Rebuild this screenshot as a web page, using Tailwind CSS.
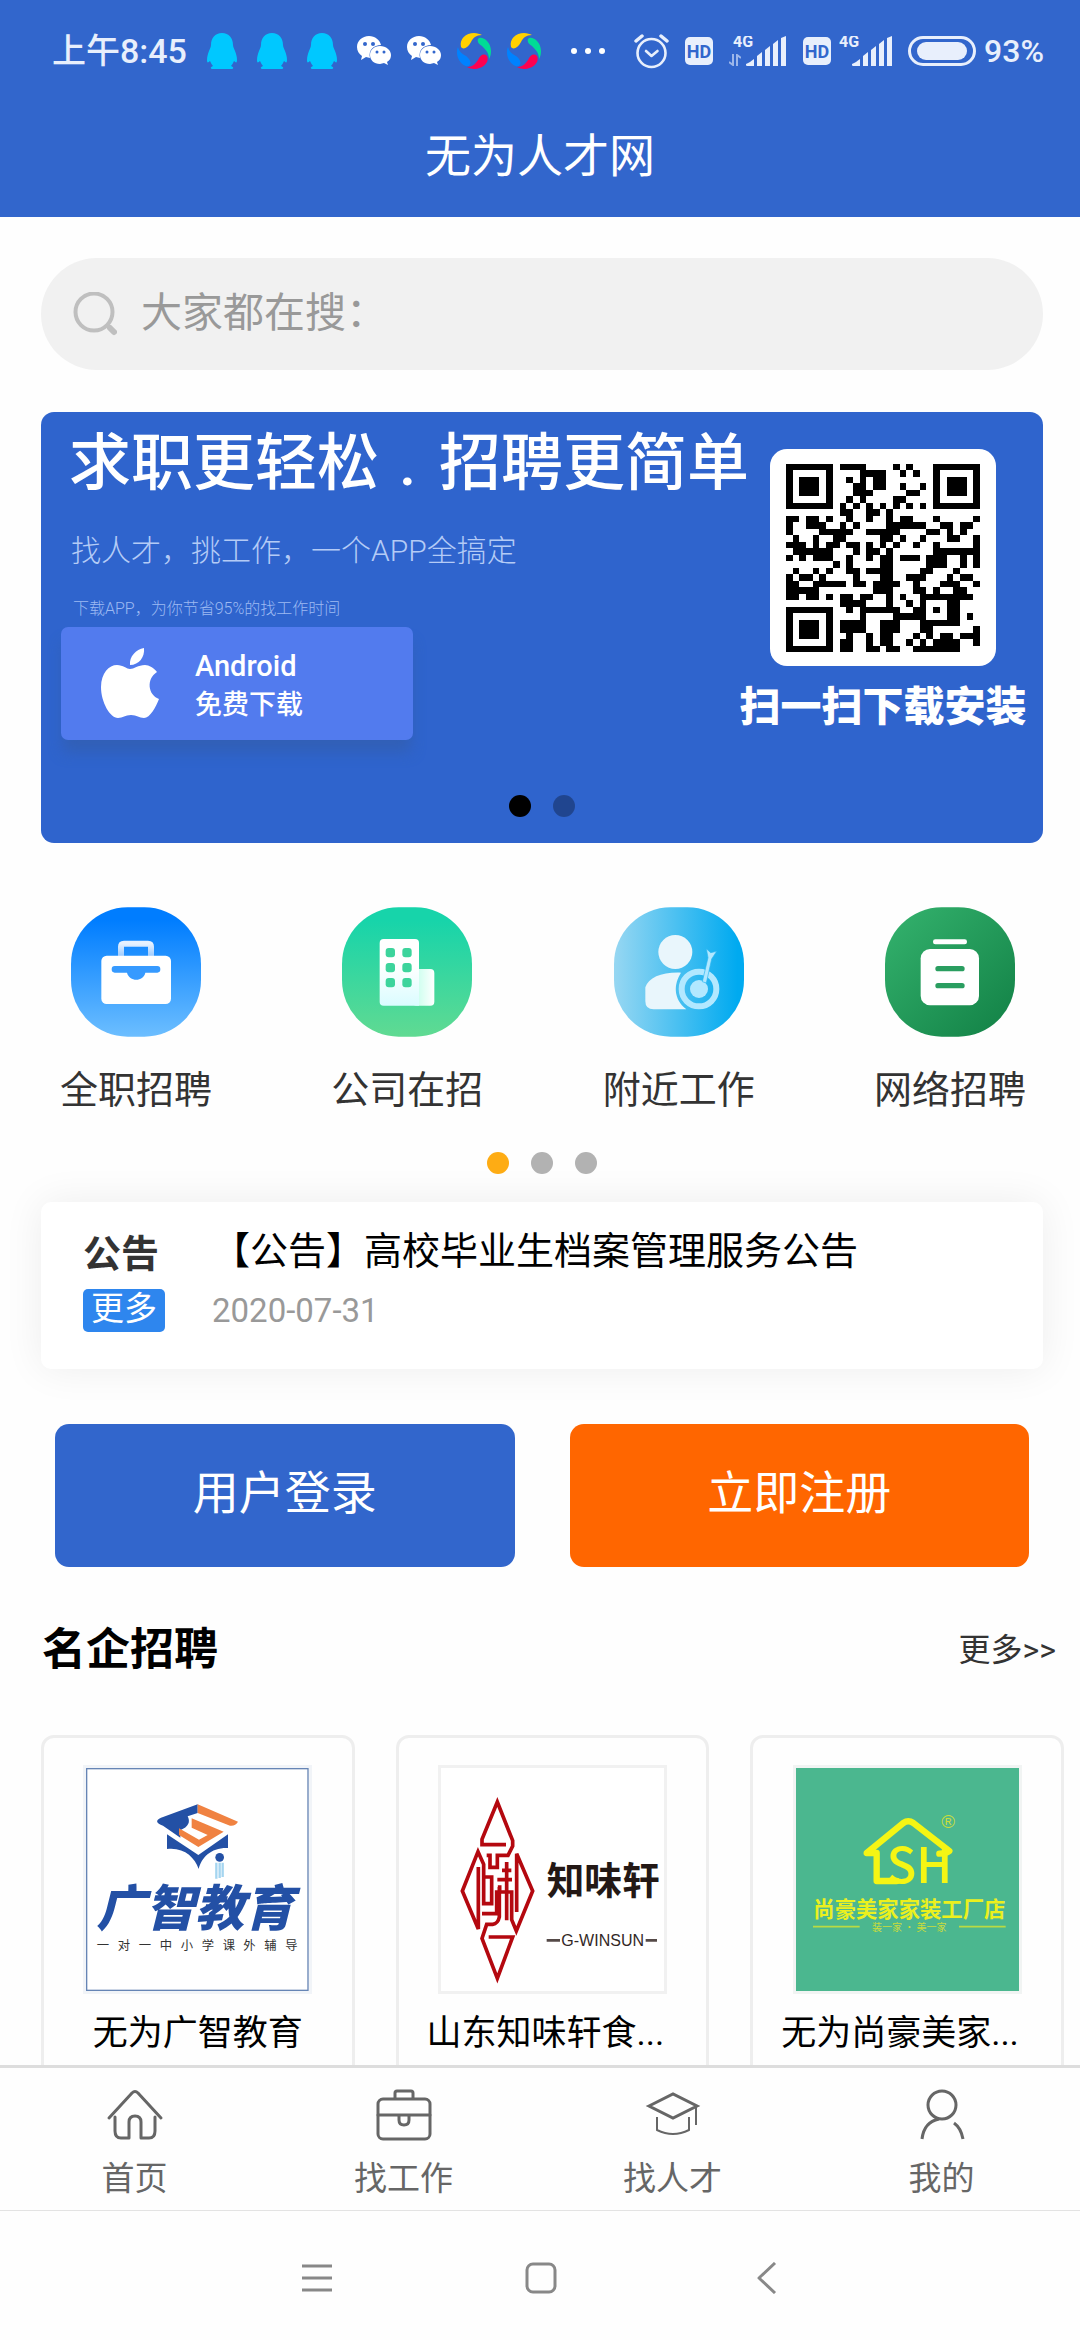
<!DOCTYPE html>
<html lang="zh-CN">
<head>
<meta charset="utf-8">
<meta name="viewport" content="width=device-width, initial-scale=1">
<title>无为人才网</title>
<script src="https://cdn.jsdelivr.net/npm/@tailwindcss/browser@4"></script>
</head>
<body class="flex h-screen flex-col overflow-hidden bg-[#fefefe] font-['Roboto','Noto_Sans_CJK_SC',sans-serif] text-[#333]">

<svg class="hidden" aria-hidden="true">
  <symbol id="penguin" viewBox="0 0 30 36">
    <path fill="#00c8ff" d="M15 0c7 0 11 5 11 12 0 3 4 8 4 15 0 3-1 3-3 1-1 2-2 4-3 5 3 1 3 3 0 3H6c-3 0-3-2 0-3-1-1-2-3-3-5-2 2-3 2-3-1 0-7 4-12 4-15C4 5 8 0 15 0z"/>
  </symbol>
  <symbol id="wechat" viewBox="0 0 34 30">
    <path fill="#fff" d="M12 0C5 0 0 5 0 11c0 4 2 7 5 9l-1 4 5-3 4 1C11 14 17 9 24 9 23 4 18 0 12 0z"/>
    <path fill="#fff" d="M23 10c-6 0-10 4-10 9s4 9 10 9l4-1 4 2-1-3c3-2 4-4 4-7 0-5-5-9-11-9z"/>
    <g fill="#3266cc"><circle cx="8" cy="8" r="2"/><circle cx="16" cy="8" r="2"/><circle cx="20" cy="16" r="1.5"/><circle cx="27" cy="16" r="1.5"/></g>
  </symbol>
  <symbol id="pinwheel" viewBox="0 0 34 36">
    <path fill="#ffd100" d="M4 14C2 6 9 0 17 0c3 0 6 1 8 2-6 0-9 3-11 7-3 6-8 8-10 5z"/>
    <path fill="#00dc96" d="M21 6c3-4 13 2 13 12 0 4-1 6-2 8 0-6-3-9-7-13-3-2-5-4-4-7z"/>
    <path fill="#ff0050" d="M30 23c3 6-4 13-13 13-2 0-5-1-7-2 6 0 8-3 11-7 2-5 6-7 9-4z"/>
    <path fill="#0082ff" d="M1 14c1 4 3 6 8 9 4 3 6 7 3 10C8 35 0 28 0 20c0-2 0-4 1-6z"/>
  </symbol>
  <symbol id="hd" viewBox="0 0 28 28">
    <rect width="28" height="28" rx="5" fill="#e8effc"/>
    <text x="14" y="21" text-anchor="middle" font-family="Roboto" font-weight="700" font-size="18" fill="#3266cc">HD</text>
  </symbol>
  <symbol id="signal" viewBox="0 0 56 30">
    <text x="0" y="11" font-family="Roboto" font-weight="700" font-size="16" fill="#e8effc">4G</text>
    <path fill="#e8effc" d="M14 30c-1 0-1-1-1-2 3-1 5-3 8-5v7zM24 20l5-4v14h-5zM32 14l5-4v20h-5zM40 8l5-4v26h-5zM48 2l5-2v30h-5z"/>
  </symbol>
</svg>

<header class="bg-[#3266cc] text-white">
  <div class="flex h-[102px] items-center justify-between pr-9 pl-[52px] text-[32px] leading-none font-medium text-[#e8effc]">
    <div class="flex items-center gap-4">
      <span class="mr-1 text-[34px]">上午8:45</span>
      <svg class="mr-1 h-9 w-[30px]"><use href="#penguin"/></svg>
      <svg class="mr-1 h-9 w-[30px]"><use href="#penguin"/></svg>
      <svg class="mr-1 h-9 w-[30px]"><use href="#penguin"/></svg>
      <svg class="h-[30px] w-[34px]"><use href="#wechat"/></svg>
      <svg class="h-[30px] w-[34px]"><use href="#wechat"/></svg>
      <svg class="h-9 w-[34px]"><use href="#pinwheel"/></svg>
      <svg class="mr-[14px] h-9 w-[34px]"><use href="#pinwheel"/></svg>
      <span class="flex gap-2"><i class="size-[6px] rounded-full bg-white"></i><i class="size-[6px] rounded-full bg-white"></i><i class="size-[6px] rounded-full bg-white"></i></span>
    </div>
    <div class="flex items-center">
      <svg class="mr-4 h-9 w-[35px]" viewBox="0 0 35 36" fill="none" stroke="#e8effc" stroke-width="2.6" stroke-linecap="round" stroke-linejoin="round"><circle cx="17.500" cy="20" r="14"/><path d="M12 18l5.500 5 6-5"/><path stroke-width="3.500" d="M2 8l6-5M33 8l-6-5"/></svg>
      <svg class="mr-4 size-7"><use href="#hd"/></svg>
      <span class="flex items-end">
        <svg class="h-3 w-3" viewBox="0 0 12 12" fill="none" stroke="#9db7ea" stroke-width="2"><path d="M4 0v11L0 8M8 12V1l4 3"/></svg>
        <svg class="-ml-2 h-[30px] w-14"><use href="#signal"/></svg>
      </span>
      <svg class="mr-2 ml-[14px] size-7"><use href="#hd"/></svg>
      <svg class="h-[30px] w-14"><use href="#signal"/></svg>
      <span class="mr-2 ml-[13px] h-[30px] w-[68px] rounded-full border-[3px] border-[#e8effc] p-[3px]"><span class="mx-[3px] block h-full rounded-full bg-[#e8effc]"></span></span>
      <span>93%</span>
    </div>
  </div>
  <h1 class="flex h-[115px] items-center justify-center pb-2 text-[46px] leading-none">无为人才网</h1>
</header>

<main class="min-h-0 flex-1 overflow-hidden">
  <div class="pt-[41px] pr-[37px] pl-[41px]">
    <label class="flex h-28 items-center gap-6 rounded-full bg-[#f1f1f1] pl-8" for="q">
      <svg class="size-11 shrink-0" viewBox="0 0 44 44" fill="none" stroke="#bfbfbf"><circle cx="21" cy="20" r="18.500" stroke-width="4"/><path stroke-width="6" stroke-linecap="round" d="M37 36l4 4"/></svg>
      <input id="q" type="text" aria-label="搜索" placeholder="大家都在搜：" class="h-full min-w-0 flex-1 bg-transparent pb-[2px] text-[41px] placeholder:text-[#999] focus:outline-none">
    </label>

    <section class="relative mt-[42px] flex h-[431px] rounded-[13px] bg-[#2f64cd] pr-4 pl-5 text-white">
      <div class="min-w-0 flex-1">
        <h2 class="mt-[14px] ml-2 flex h-[76px] items-center text-[62px] leading-none font-medium whitespace-nowrap">求职更轻松<span class="w-[60px] shrink-0 pl-5">.</span>招聘更简单</h2>
        <p class="mt-[31px] ml-[10px] text-[30px] leading-[36px] font-light whitespace-nowrap text-[#b4cbf6]">找人才，挑工作，一个APP全搞定</p>
        <p class="mt-[28px] ml-3 text-[16px] leading-[24px] font-light whitespace-nowrap text-[#9dbaf2]">下载APP，为你节省95%的找工作时间</p>
        <button class="mt-[6px] flex h-[113px] w-[352px] items-center rounded-[7px] bg-[#527bee] pl-10 text-left shadow-[0_14px_14px_-2px_rgba(50,95,180,0.9)]">
          <svg class="h-[71px] w-[58px]" viewBox="0 0 58 71" fill="#fff"><path d="M43 0c1 9-5 17-14 17C28 9 35 1 43 0z"/><path d="M29 21c4 0 8-4 15-4 4 0 9 3 12 7-11 7-9 23 2 27-3 8-9 19-15 19-5 0-7-3-13-3s-8 3-13 3C9 70 0 54 0 39c0-14 8-22 16-22 6 0 10 4 13 4z"/></svg>
          <span class="ml-9 pt-1 text-[29px] leading-[38px] font-medium">Android<br><span class="text-[27px]">免费下载</span></span>
        </button>
      </div>
      <div class="flex w-[288px] shrink-0 flex-col items-center pt-[37px]">
        <div class="flex h-[217px] w-[226px] items-center justify-center rounded-[17px] bg-white">
          <svg class="h-[188px] w-[194px]" viewBox="0 0 29 29" preserveAspectRatio="none" shape-rendering="crispEdges" role="img" aria-label="二维码"><path id="qr" fill="#000"/></svg>
        </div>
        <p class="mt-[17px] text-[41px] leading-[48px] font-black whitespace-nowrap">扫一扫下载安装</p>
      </div>
      <div class="absolute inset-x-0 bottom-[26px] flex justify-center gap-[22px]"><i class="size-[22px] rounded-full bg-black"></i><i class="size-[22px] rounded-full bg-black/30"></i></div>
    </section>
  </div>

  <nav class="mt-16 flex justify-between pr-[54px] pl-[60px] text-[38px] leading-[52px]">
    <a href="#" class="flex flex-col items-center gap-[27px]">
      <svg class="size-[130px]" viewBox="125 80 390 388"><defs><linearGradient id="g1" x2="0" y2="1"><stop offset=".1" stop-color="#007dff"/><stop offset="1" stop-color="#6cbeff"/></linearGradient><linearGradient id="g1b" x2="0" y2="1"><stop offset=".2" stop-color="#e6f1ff"/><stop offset="1" stop-color="#9ccbff"/></linearGradient></defs><rect x="125" y="80" width="390" height="388" rx="170" fill="url(#g1)"/><path fill="url(#g1b)" d="M266 226v-28q0-18 18-18h72q18 0 18 18v28h-18v-28h-72v28z"/><rect x="216" y="225" width="209" height="145" rx="16" fill="#fff"/><path fill="#369aff" d="M256 256h128q9 0 9 10t-9 10h-36c-6 28-48 28-55 0h-37q-9 0-9-10t9-10z"/></svg>
      <span>全职招聘</span></a>
    <a href="#" class="flex flex-col items-center gap-[27px]">
      <svg class="size-[130px]" viewBox="938 80 390 388"><defs><linearGradient id="g2" x2="0" y2="1"><stop offset=".1" stop-color="#17d4aa"/><stop offset="1" stop-color="#60da92"/></linearGradient><linearGradient id="g2b" x2="0" y2="1"><stop offset=".4" stop-color="#fff"/><stop offset="1" stop-color="#dafcff"/></linearGradient><linearGradient id="g2c"><stop offset=".3" stop-color="#d2fff0"/><stop offset="1" stop-color="#fff"/></linearGradient></defs><rect x="938" y="80" width="390" height="388" rx="170" fill="url(#g2)"/><rect x="1150" y="265" width="65" height="110" rx="12" fill="url(#g2c)"/><path fill="url(#g2b)" d="M1063 175h94q12 0 12 12v188h-106q-12 0-12-12V187q0-12 12-12z"/><g fill="#3dd49c"><rect x="1069" y="202" width="28" height="28" rx="9"/><rect x="1119" y="202" width="28" height="28" rx="9"/><rect x="1069" y="247" width="28" height="28" rx="9"/><rect x="1119" y="247" width="28" height="28" rx="9"/><rect x="1069" y="292" width="28" height="28" rx="9"/><rect x="1119" y="292" width="28" height="28" rx="9"/></g></svg>
      <span>公司在招</span></a>
    <a href="#" class="flex flex-col items-center gap-[27px]">
      <svg class="size-[130px]" viewBox="161 80 390 388"><defs><linearGradient id="g3"><stop offset="0" stop-color="#97d7f2"/><stop offset=".95" stop-color="#00aaf0"/></linearGradient></defs><rect x="161" y="80" width="390" height="388" rx="170" fill="url(#g3)"/><circle cx="345" cy="214" r="51" fill="#e9f6fc"/><path fill="#e9f6fc" d="M362 276c-22 34-24 78 16 110H280q-25 0-25-24v-42c10-30 50-46 107-44z"/><circle cx="416" cy="325" r="52" fill="none" stroke="#b2e8ff" stroke-width="18"/><circle cx="416" cy="325" r="27" fill="#b2e8ff"/><path fill="#b2e8ff" stroke="#2cb6f2" stroke-width="2" d="M426 303l17-72-5-27 13 12 18-4-15 23-16 72z"/></svg>
      <span>附近工作</span></a>
    <a href="#" class="flex flex-col items-center gap-[27px]">
      <svg class="size-[130px]" viewBox="974 80 390 388"><defs><linearGradient id="g4" x2="1" y2="1"><stop offset=".1" stop-color="#31ae6a"/><stop offset=".9" stop-color="#158549"/></linearGradient></defs><rect x="974" y="80" width="390" height="388" rx="170" fill="url(#g4)"/><rect x="1118" y="176" width="102" height="15" rx="7" fill="#fff"/><rect x="1081" y="205" width="175" height="169" rx="28" fill="#fff"/><g fill="#2a9e60"><rect x="1125" y="256" width="88" height="16" rx="8"/><rect x="1125" y="307" width="88" height="16" rx="8"/></g></svg>
      <span>网络招聘</span></a>
  </nav>
  <div class="mt-9 flex justify-center gap-[22px] pl-1"><i class="size-[22px] rounded-full bg-[#feac14]"></i><i class="size-[22px] rounded-full bg-[#b2b2b2]"></i><i class="size-[22px] rounded-full bg-[#b2b2b2]"></i></div>

  <section class="mt-7 mr-[37px] ml-[41px] flex h-[167px] gap-[47px] rounded-[10px] bg-white pt-6 pl-[42px] shadow-[0_0_40px_rgba(0,20,10,0.07)]">
    <div class="w-[82px]">
      <h2 class="h-[63px] pt-[3px] text-[38px] leading-[50px] font-bold">公告</h2>
      <a href="#" class="block h-[43px] rounded-[5px] bg-[#2e86ee] text-center text-[33px] leading-[40px] text-white">更多</a>
    </div>
    <div>
      <a href="#" class="block text-[38px] leading-[50px] text-black">【公告】高校毕业生档案管理服务公告</a>
      <time class="mt-[15px] block text-[33px] leading-[40px] text-[#999]">2020-07-31</time>
    </div>
  </section>

  <div class="mt-[55px] grid grid-cols-2 gap-[55px] pr-[51px] pl-[55px] text-[46px] text-white">
    <button class="h-[143px] rounded-[14px] bg-[#3266cc] pb-1">用户登录</button>
    <button class="h-[143px] rounded-[14px] bg-[#ff6600] pb-1">立即注册</button>
  </div>

  <div class="mt-[51px] flex h-16 items-center justify-between pr-6 pl-[42px]">
    <h2 class="text-[44px] leading-none font-bold text-black">名企招聘</h2>
    <a href="#" class="text-[32px] leading-none">更多&gt;&gt;</a>
  </div>

  <div class="mt-[53px] grid grid-cols-3 gap-[41px] pr-4 pl-[41px] text-[35px] leading-[48px] text-black">
    <a href="#" class="flex h-[360px] flex-col items-center gap-4 rounded-[13px] border-[3px] border-[#eee] pt-[27px]">
      <svg class="size-[229px] border-[3px] border-[#f1f4f8]" viewBox="171 143 669 669" role="img" aria-label="广智教育"><rect x="173" y="145" width="664" height="665" fill="#fff" stroke="#6685b5" stroke-width="4"/>
        <path fill="#2350a5" d="M506 252v26l-30 10q14 26-22 42v22l-52-36q-32-12-6-24zM414 342q30 20 94 62l89-62v41c-50-2-80 28-88 63-12-35-44-66-95-60z"/>
        <path fill="#f08241" d="M506 252l121 52q-8 14-24 12l-97-38zM488 294l96 40-76 46-58-36v-20l60 34 26-14-48-22z"/>
        <circle cx="572" cy="411" r="13" fill="#2350a5"/><path stroke="#a5d5f0" stroke-width="7" d="M562 427v48M572 427v46M581 427v43"/>
        <text x="202" y="616" font-family="Noto Sans CJK SC" font-size="148" font-weight="900" font-style="italic" fill="#2350a5">广智教育</text>
        <text y="690" x="203 266 329 392 455 518 581 643 706 769" font-family="Noto Sans CJK SC" font-size="37" fill="#333">一对一中小学课外辅导</text></svg>
      <span>无为广智教育</span></a>
    <a href="#" class="flex h-[360px] flex-col items-center gap-4 rounded-[13px] border-[3px] border-[#eee] pt-[27px]">
      <svg class="size-[229px] border-[3px] border-[#f1f1f1]" viewBox="183 143 669 669" role="img" aria-label="知味轩 G-WINSUN"><rect x="183" y="143" width="669" height="669" fill="#fff"/>
        <g fill="none" stroke="#b4080f" stroke-width="11"><path d="M378 373h-72v-16l46-112 46 116v16l-14 28h-32v36h-22v-36h-10"/><path d="M295 440v186L247 512l47-118 17 38v118h24V470h-24M410 575V400l48 112-49 120-14-34V515h-36v-20M306 580h44v-70M366 450h28M352 478h44M380 425v175M358 500v90q-4 20-20 22h-18l-14 42 46 120 46-124h-72"/></g>
        <text x="500" y="520" font-family="Noto Sans CJK SC" font-size="113" font-weight="700" fill="#231815">知味轩</text>
        <path stroke="#554a48" stroke-width="8" d="M500 660h40M797 660h34"/>
        <text x="668" y="678" text-anchor="middle" font-family="Liberation Sans Narrow, Liberation Sans" font-size="48" fill="#332826">G-WINSUN</text></svg>
      <span class="w-[252px]">山东知味轩食...</span></a>
    <a href="#" class="flex h-[360px] flex-col items-center gap-4 rounded-[13px] border-[3px] border-[#eee] pt-[27px]">
      <svg class="size-[229px] border-[3px] border-[#f1f4f3]" viewBox="198 143 669 669" role="img" aria-label="尚豪美家家装工厂店"><rect x="198" y="143" width="669" height="669" fill="#4bb78f"/>
        <path fill="none" stroke="#f5f514" stroke-width="19" stroke-linejoin="round" stroke-linecap="round" d="M500 482h-60v-84h-30l110-90q15-10 30 0l108 84q-10 8-30 8"/>
        <text x="470" y="489" font-family="Noto Sans CJK SC" font-size="146" font-weight="500" fill="#f5f514">SH</text>
        <text x="654" y="324" text-anchor="middle" font-family="Liberation Sans" font-size="56" fill="#c8dc3c">®</text>
        <text x="538" y="590" text-anchor="middle" font-family="Noto Sans CJK SC" font-size="64" font-weight="700" fill="#ebf01e">尚豪美家家装工厂店</text>
        <path stroke="#b9db42" stroke-width="5" d="M249 619h140M687 619h140"/>
        <text x="538" y="631" text-anchor="middle" font-family="Noto Sans CJK SC" font-size="30" fill="#c8dc3c">装一家 · 美一家</text></svg>
      <span class="w-[252px]">无为尚豪美家...</span></a>
  </div>
</main>

<nav class="grid h-[145px] shrink-0 grid-cols-4 border-t-[3px] border-[#ddd] bg-[#fefefe] pr-1 pt-[16px] text-[33px] leading-[44px] text-[#666]">
  <a href="#" class="flex flex-col items-center gap-[13px]"><svg class="size-[60px]" viewBox="0 0 60 60" fill="none" stroke="#666" stroke-width="3" stroke-linecap="round" stroke-linejoin="round"><path d="M4 34L27 9q3-3 6 0l23 25M10 33v14q0 7 6 7h8V38q0-6 6-6t6 6v16h8q6 0 6-7V33"/></svg><span>首页</span></a>
  <a href="#" class="flex flex-col items-center gap-[13px]"><svg class="size-[60px]" viewBox="0 0 60 60" fill="none" stroke="#666" stroke-width="3" stroke-linecap="round" stroke-linejoin="round"><rect x="4" y="15" width="52" height="40" rx="5"/><path d="M21 14V9q0-2 2-2h14q2 0 2 2v5M4 31h52M25 32v4q0 5 5 5t5-5v-4"/></svg><span>找工作</span></a>
  <a href="#" class="flex flex-col items-center gap-[13px]"><svg class="size-[60px]" viewBox="0 0 60 60" fill="none" stroke="#666" stroke-width="3" stroke-linejoin="miter"><path d="M6 22L30 10l24 12-24 12z"/><path stroke-width="2" d="M14 33v13q16 8 32 0V33M53 23v18"/></svg><span>找人才</span></a>
  <a href="#" class="flex flex-col items-center gap-[13px]"><svg class="size-[60px]" viewBox="0 0 60 60" fill="none" stroke="#666" stroke-width="3"><circle cx="30" cy="21" r="14"/><path d="M27 35Q12 38 10 55M42 39q7 5 9 16"/></svg><span>我的</span></a>
</nav>

<footer class="flex h-[130px] shrink-0 items-center justify-center border-t border-[#e3e3e3] bg-[#fefefe] pt-1 pl-[2px]">
  <button aria-label="菜单" class="mr-48"><svg class="size-8" viewBox="0 0 32 32" stroke="#888" stroke-width="3"><path d="M1 4h30M1 16h30M1 28h30"/></svg></button>
  <button aria-label="主页"><svg class="size-8" viewBox="0 0 32 32" fill="none" stroke="#888" stroke-width="3"><rect x="2" y="2" width="28" height="28" rx="6"/></svg></button>
  <button aria-label="返回" class="ml-48"><svg class="size-8" viewBox="0 0 32 32" fill="none" stroke="#888" stroke-width="3" stroke-linejoin="round"><path d="M26 1L10 16l16 15"/></svg></button>
</footer>

<script>
  // QR modules: each row lists its dark columns, as single columns or ranges
  const rows = [
    '0-6 8-11 16 18 22-28', '0 6 11-14 17 19 22 28', '0 2-4 6 9 11 13-14 22 24-26 28',
    '0 2-4 6 10-11 13-14 17 20 22 24-26 28', '0 2-4 6 10-12 18-19 22 24-26 28', '0 6 9 11 16-17 22 28',
    '0-6 8 10 12 14 16 18 20 22-28', '8-9 12-13 15', '0-1 3-4 6 9 12 15 17-18 22 28',
    '0 3-5 8 10 15-20 23-24 26-27', '0 5-9 12-16 21-22 24 26', '1 4 7-8 14-15 17 20 24-25 28',
    '0-2 4 6-7 9-10 12 14 16 19 22 28', '1-6 10 12-13 15 22-28', '0 2 4-6 9 12 14-15 17-19 21-23 26 28',
    '7 9 14-15 21-23 26 28', '1 4 6 9-10 12-15 20-21 25', '0 2-3 5 10 14-15 18-20 24 26-27',
    '0-1 4-8 10-11 13-16 19 23-25 28', '0-4 13-15 19-20 22 25-26', '0-1 3-4 6 8-9 11-12 15 17 20-27',
    '8-11 15 18 20 24-25', '0-6 9 11-16 19-20 22 24-25', '0 6 11 16-20 24-25 27',
    '0 2-4 6 8-11 14-16 20-25', '0 2-4 6 8-11 14-16 20-21 28', '0 2-4 6 9 12 14-15 19 21 23-24 26-28',
    '0 6 8-9 12 14-15 18 20 22-25 28', '0-6 8-9 12-13 15-16 19-25'
  ];
  document.getElementById('qr').setAttribute('d', rows.map((r, y) => r.split(' ').map(s => {
    const [a, b = a] = s.split('-').map(Number);
    return `M${a} ${y}h${b - a + 1}v1h-${b - a + 1}z`;
  }).join('')).join(''));
</script>
</body>
</html>
